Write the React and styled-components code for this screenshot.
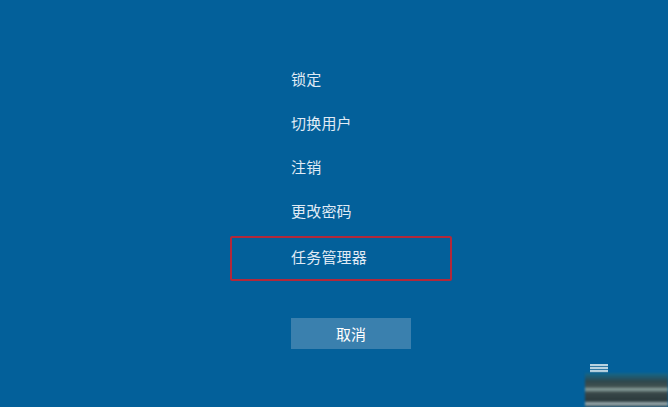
import React from "react";
import styled, { createGlobalStyle } from "styled-components";

const GlobalStyle = createGlobalStyle`
  html, body {
    margin: 0;
    padding: 0;
  }
  body {
    font-family: "Noto Sans CJK SC", "Noto Sans", sans-serif;
  }
`;

const Screen = styled.div`
  position: relative;
  width: 668px;
  height: 407px;
  overflow: hidden;
  background: #03609a;
  display: flex;
  justify-content: flex-start;
`;

const Menu = styled.div`
  display: flex;
  flex-direction: column;
  width: 222px;
  margin-left: 230px;
  padding-top: 58px;
`;

const Option = styled.div`
  box-sizing: border-box;
  display: flex;
  align-items: center;
  padding-left: ${(p) => (p.$selected ? "59px" : "61px")};
  padding-bottom: 4px;
  color: #e0ebf5;
  font-size: 15px;
  letter-spacing: 0.2px;
  border: ${(p) => (p.$selected ? "2px solid #b3283a" : "none")};
  border-radius: 2px;
  margin-top: ${(p) => (p.$selected ? "2px" : "0")};
  height: ${(p) => (p.$selected ? "45px" : "44px")};
`;

const CancelButton = styled.button`
  align-self: flex-start;
  margin-left: 61px;
  margin-top: 37px;
  width: 120px;
  height: 31px;
  border: none;
  background: #3a80ae;
  color: #ffffff;
  font-family: "Noto Sans CJK SC", "Noto Sans", sans-serif;
  font-size: 15px;
  padding: 0;
`;

/* blurry leftover of a desktop window at the bottom right */
const Smudge = styled.div`
  position: absolute;
  left: 585px;
  right: 0;
  bottom: 0;
  height: 34px;
  background: linear-gradient(
    to bottom,
    rgba(30, 110, 130, 0.6) 0%,
    rgba(50, 70, 72, 0.95) 25%,
    rgba(70, 80, 76, 0.95) 40%,
    rgba(170, 180, 165, 0.85) 48%,
    rgba(60, 70, 68, 0.95) 58%,
    rgba(45, 55, 55, 0.95) 82%,
    rgba(200, 205, 200, 0.85) 90%,
    rgba(50, 60, 60, 0.95) 100%
  );
  filter: blur(1px);
`;

const SmudgeLabel = styled.div`
  position: absolute;
  left: 590px;
  top: 364px;
  width: 18px;
  height: 9px;
  background: repeating-linear-gradient(
    to bottom,
    #d8e8ee 0px,
    #d8e8ee 2px,
    #3a7ea6 2px,
    #3a7ea6 3px
  );
  opacity: 0.85;
  filter: blur(0.4px);
`;

const options = ["锁定", "切换用户", "注销", "更改密码", "任务管理器"];

const App = () => (
  <>
    <GlobalStyle />
    <Screen>
      <Menu>
        {options.map((label) => (
          <Option key={label} $selected={label === "任务管理器"}>
            {label}
          </Option>
        ))}
        <CancelButton>取消</CancelButton>
      </Menu>
      <SmudgeLabel />
      <Smudge />
    </Screen>
  </>
);

export default App;
